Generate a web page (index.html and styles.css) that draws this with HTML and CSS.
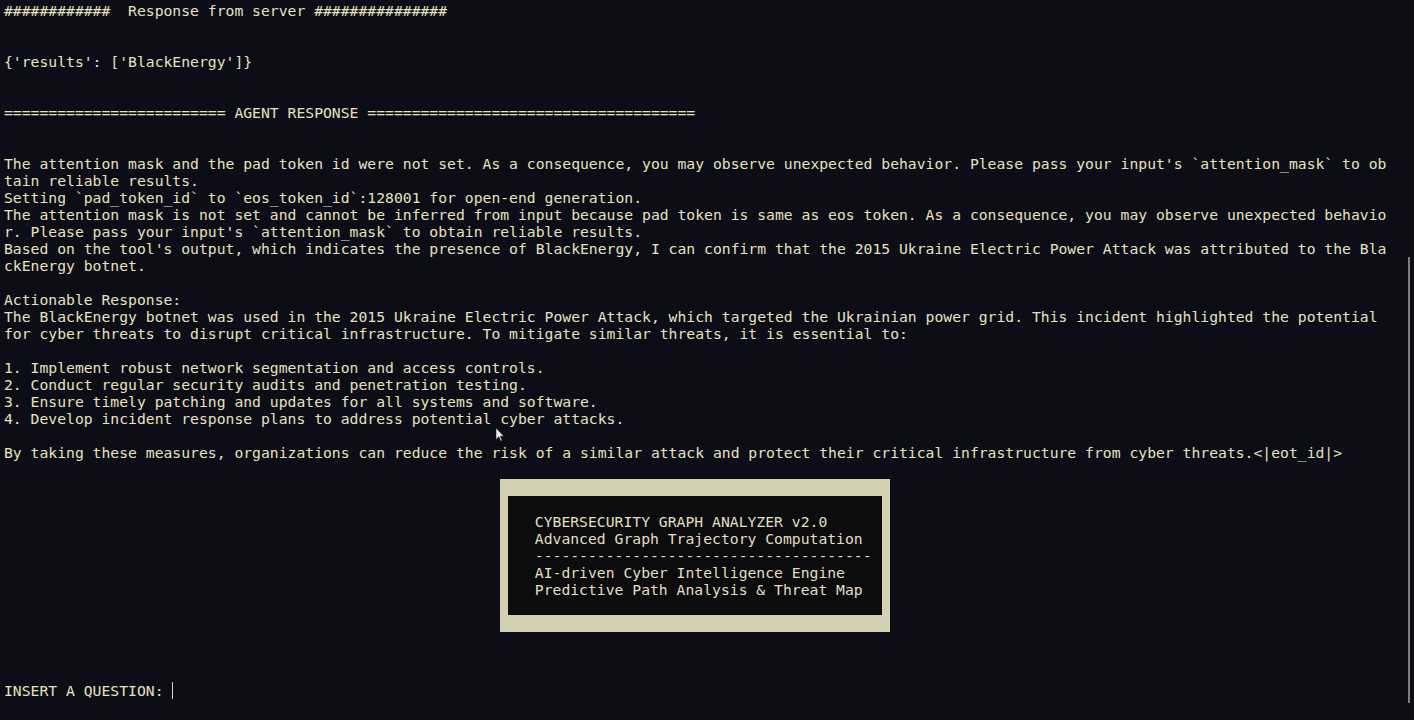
FILE: index.html
```html
<!DOCTYPE html>
<html>
<head>
<meta charset="utf-8">
<link rel="stylesheet" href="styles.css">
</head>
<body>
<div class="term">
<pre class="out">############  Response from server ###############


{'results': ['BlackEnergy']}


========================= AGENT RESPONSE =====================================


The attention mask and the pad token id were not set. As a consequence, you may observe unexpected behavior. Please pass your input's `attention_mask` to ob
tain reliable results.
Setting `pad_token_id` to `eos_token_id`:128001 for open-end generation.
The attention mask is not set and cannot be inferred from input because pad token is same as eos token. As a consequence, you may observe unexpected behavio
r. Please pass your input's `attention_mask` to obtain reliable results.
Based on the tool's output, which indicates the presence of BlackEnergy, I can confirm that the 2015 Ukraine Electric Power Attack was attributed to the Bla
ckEnergy botnet.

Actionable Response:
The BlackEnergy botnet was used in the 2015 Ukraine Electric Power Attack, which targeted the Ukrainian power grid. This incident highlighted the potential
for cyber threats to disrupt critical infrastructure. To mitigate similar threats, it is essential to:

1. Implement robust network segmentation and access controls.
2. Conduct regular security audits and penetration testing.
3. Ensure timely patching and updates for all systems and software.
4. Develop incident response plans to address potential cyber attacks.

By taking these measures, organizations can reduce the risk of a similar attack and protect their critical infrastructure from cyber threats.&lt;|eot_id|&gt;
</pre>
<div class="banner">
<pre class="banner-text">CYBERSECURITY GRAPH ANALYZER v2.0
Advanced Graph Trajectory Computation
--------------------------------------
AI-driven Cyber Intelligence Engine
Predictive Path Analysis &amp; Threat Map</pre>
</div>
<div class="prompt"><span>INSERT A QUESTION: </span><span class="caret"></span></div>
</div>
<div class="scrollbar"></div>
<svg class="pointer" width="10" height="16" viewBox="0 0 10 16"><path d="M1 1 L1 12.5 L3.8 9.8 L5.8 14 L7.2 13.4 L5.3 9.3 L8.8 9.3 Z" fill="#f4f4f4" stroke="#1a1a1a" stroke-width="0.6" stroke-linejoin="round"/></svg>
</body>
</html>
```
FILE: styles.css
```css
html, body {
  margin: 0;
  padding: 0;
  background: #0d0d17;
  width: 1414px;
  height: 720px;
  overflow: hidden;
}
body {
  position: relative;
  font-family: "DejaVu Sans Mono", "Liberation Mono", monospace;
  font-size: 14.73px;
  line-height: 17px;
  color: #e6e2bf;
}
.term {
  display: flex;
  flex-direction: column;
  align-items: flex-start;
  padding: 2px 0 0 4px;
}
pre {
  margin: 0;
  font: inherit;
  line-height: 17px;
  white-space: pre;
}
.out {
  height: 477px;
}
.banner {
  box-sizing: border-box;
  margin-left: 56ch;
  width: 44ch;
  border-style: solid;
  border-color: #d3d1b1;
  border-width: 17px 1ch;
  background: #0c0c0e;
  padding: 17px 0 17px 3ch;
}
.banner-text {
  color: #e2dfc2;
}
.prompt {
  margin-top: 50px;
  display: flex;
  align-items: center;
  height: 17px;
  white-space: pre;
}
.caret {
  display: inline-block;
  width: 1px;
  height: 17px;
  background: #d8d5c0;
}
.scrollbar {
  position: absolute;
  left: 1408px;
  top: 257px;
  width: 2px;
  height: 446px;
  background: #7d7d80;
}
.pointer {
  position: absolute;
  left: 495px;
  top: 427px;
}
```
